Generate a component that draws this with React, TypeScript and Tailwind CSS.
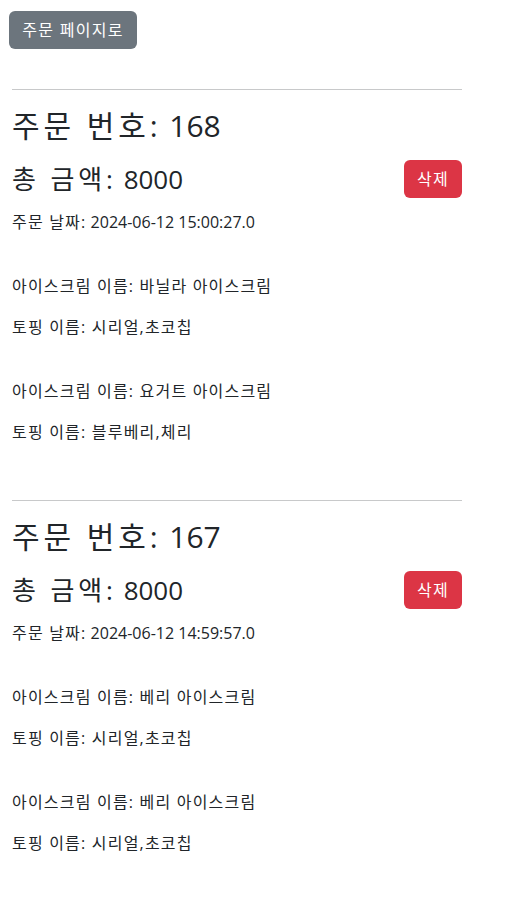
import React from "react";

interface OrderItem {
  iceCream: string;
  toppings: string;
}

interface Order {
  id: number;
  total: number;
  date: string;
  items: OrderItem[];
}

const orders: Order[] = [
  {
    id: 168,
    total: 8000,
    date: "2024-06-12 15:00:27.0",
    items: [
      { iceCream: "바닐라 아이스크림", toppings: "시리얼,초코칩" },
      { iceCream: "요거트 아이스크림", toppings: "블루베리,체리" },
    ],
  },
  {
    id: 167,
    total: 8000,
    date: "2024-06-12 14:59:57.0",
    items: [
      { iceCream: "베리 아이스크림", toppings: "시리얼,초코칩" },
      { iceCream: "베리 아이스크림", toppings: "시리얼,초코칩" },
    ],
  },
];

function OrderCard({ order }: { order: Order }) {
  return (
    <div className="pb-[56px]">
      <hr className="border-t border-[#c8c9ca]" />
      <h1 className="mt-[18px] text-[30px] leading-[36px] font-normal">
        <span className="tracking-[0.13em]">주문 번호:</span> {order.id}
      </h1>
      <div className="mt-4 flex h-[38px] items-center justify-between">
        <h2 className="text-[26px] leading-[31px] font-normal">
          <span className="tracking-[0.15em]">총 금액:</span> {order.total}
        </h2>
        <button className="h-[38px] w-[58px] rounded-md bg-[#dc3545] text-base text-white tracking-[0.08em]">
          삭제
        </button>
      </div>
      <p className="mt-3 text-base leading-6">
        <span className="tracking-[0.075em]">주문 날짜:</span> {order.date}
      </p>
      {order.items.map((item, index) => (
        <div key={index} className="mt-10 tracking-[0.075em]">
          <p className="text-base leading-6">아이스크림 이름: {item.iceCream}</p>
          <p className="mt-[17px] text-base leading-6">토핑 이름: {item.toppings}</p>
        </div>
      ))}
    </div>
  );
}

export default function App() {
  return (
    <div
      className="min-h-screen bg-white text-[#212529]"
      style={{ fontFamily: '"Open Sans", "Noto Sans CJK KR", sans-serif' }}
    >
      <div className="pt-[11px] pl-[9px]">
        <button className="h-[38px] w-[128px] rounded-md bg-[#6c757d] text-base text-white tracking-[0.08em]">
          주문 페이지로
        </button>
      </div>
      <div className="mt-10 w-[450px] ml-3">
        {orders.map((order) => (
          <OrderCard key={order.id} order={order} />
        ))}
      </div>
    </div>
  );
}
